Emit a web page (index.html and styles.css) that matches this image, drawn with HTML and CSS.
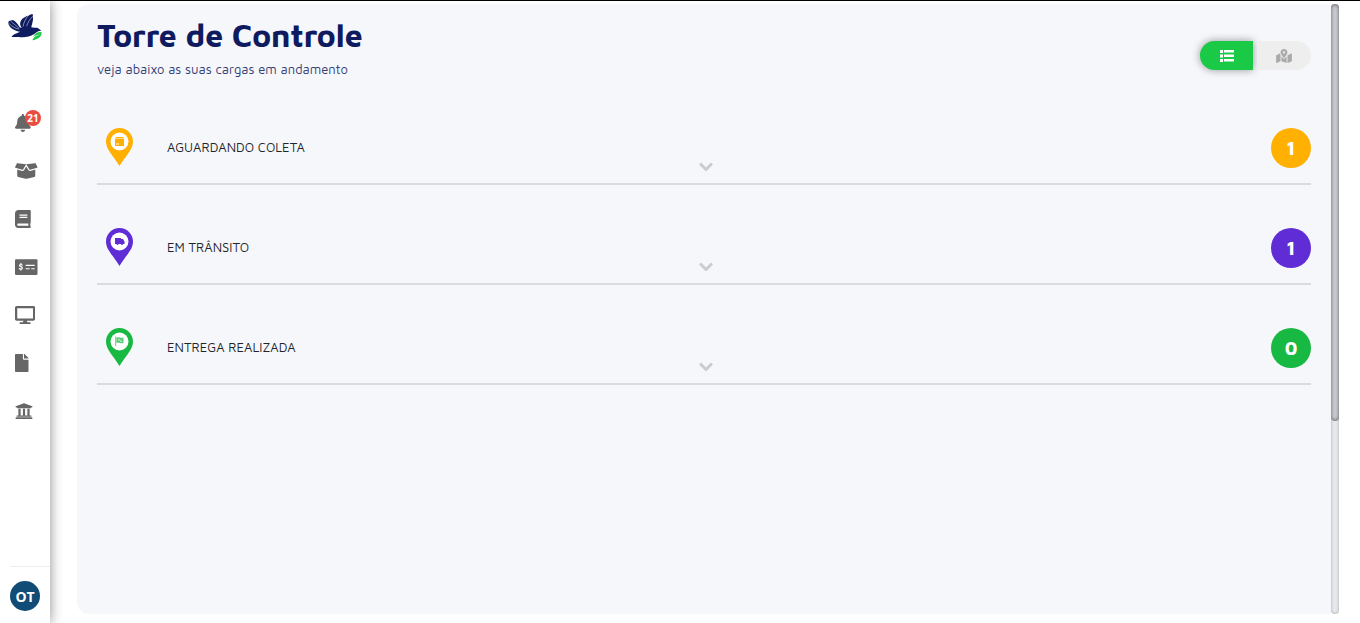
FILE: index.html
```html
<!DOCTYPE html>
<html lang="pt-BR">
  <head>
    <meta charset="utf-8" />
    <meta name="viewport" content="width=device-width, initial-scale=1" />
    <title>Torre de Controle</title>
    <link rel="stylesheet" href="styles.css">
  </head>
  <body>
    <div class="app">
      <nav class="sidebar">
        <a class="logo" href="#" aria-label="Início">
          <svg viewBox="0 0 102 82" width="34" height="27">
            <path fill="#0f1b5f" d="M10 69C14 63 25 59 36 54C22 52 8 45 3 35C0 30 0 25 2 21L14 18C20 20 26 26 31 34C33 39 37 42 41 42C35 35 35 26 39 20C43 11 54 8 58 5L61 6C64 2 71 0 75 1L75 9C77 19 72 30 70 40C78 43 88 38 96 47L101 51C91 50 88 55 79 61C65 71 45 72 32 70C24 69 17 71 10 69Z"/>
            <path fill="none" stroke="#fff" stroke-width="1.500" d="M45 38C47 26 53 15 60 5M56 37C59 27 66 14 75 7M3 29C12 39 23 44 33 46M7 21C15 30 24 34 33 44"/>
            <path fill="#1fc84b" d="M101 55C103 67 93 78 73 80C77 69 86 64 99 62C88 62 80 65 75 70C81 59 89 54 101 55Z"/>
          </svg>
        </a>
        <ul class="menu">
          <li>
            <a href="#" aria-label="Notificações">
              <svg class="icon" viewBox="0 0 448 512"><path d="M224 512c35.32 0 63.97-28.65 63.97-64H160.03c0 35.35 28.65 64 63.97 64zm215.39-149.71c-19.32-20.76-55.47-51.99-55.47-154.29 0-77.7-54.48-139.9-127.94-155.16V32c0-17.67-14.32-32-31.98-32s-31.98 14.33-31.98 32v20.84C118.56 68.1 64.08 130.3 64.08 208c0 102.3-36.15 133.53-55.47 154.29-6 6.45-8.66 14.16-8.61 21.71.11 16.4 12.98 32 32.1 32h383.8c19.12 0 32-15.6 32.1-32 .05-7.55-2.61-15.27-8.61-21.71z"/></svg>
              <span class="badge">21</span>
            </a>
          </li>
          <li>
            <a href="#" aria-label="Cargas">
              <svg class="icon" viewBox="0 0 640 512"><path d="M425.7 256c-16.9 0-32.8-9-41.4-23.4L320 126l-64.2 106.6c-8.7 14.5-24.6 23.5-41.5 23.5-4.5 0-9-.6-13.3-1.9L64 215v178c0 14.7 10 27.5 24.2 31l216.2 54.1c10.2 2.5 20.9 2.5 31 0L551.8 424c14.2-3.6 24.2-16.4 24.2-31V215l-137 39.1c-4.3 1.3-8.8 1.9-13.3 1.9zm212.6-112.2L586.8 41c-3.1-6.2-9.8-9.8-16.7-8.9L320 64l91.7 152.1c3.8 6.3 11.4 9.3 18.5 7.3l197.9-56.5c9.9-2.9 14.7-13.9 10.2-23.1zM53.2 41L1.7 143.8c-4.6 9.2.3 20.2 10.1 23l197.9 56.5c7.1 2 14.7-1 18.5-7.3L320 64 69.8 32.1c-6.9-.8-13.5 2.7-16.6 8.9z"/></svg>
            </a>
          </li>
          <li>
            <a href="#" aria-label="Cadastros">
              <svg class="icon" viewBox="0 0 448 512"><path d="M448 360V24c0-13.3-10.7-24-24-24H96C43 0 0 43 0 96v320c0 53 43 96 96 96h328c13.3 0 24-10.7 24-24v-16c0-7.5-3.5-14.3-8.9-18.7-4.2-15.4-4.2-59.3 0-74.7 5.4-4.3 8.9-11.1 8.9-18.6zM128 134c0-3.3 2.7-6 6-6h212c3.3 0 6 2.7 6 6v20c0 3.3-2.7 6-6 6H134c-3.3 0-6-2.7-6-6v-20zm0 64c0-3.3 2.7-6 6-6h212c3.3 0 6 2.7 6 6v20c0 3.3-2.7 6-6 6H134c-3.3 0-6-2.7-6-6v-20zm253.4 250H96c-17.7 0-32-14.3-32-32 0-17.6 14.4-32 32-32h285.4c-1.9 17.1-1.9 46.9 0 64z"/></svg>
            </a>
          </li>
          <li>
            <a href="#" aria-label="Pagamentos">
              <svg class="icon" viewBox="0 0 640 512">
                <rect y="32" width="640" height="448" rx="34"/>
                <path fill="none" stroke="#fff" stroke-width="32" d="M304 208H560M304 304H416M464 304H560"/>
                <path fill="none" stroke="#fff" stroke-width="34" stroke-linecap="round" d="M204 202C180 180 128 184 128 214C128 254 208 240 208 284C208 322 145 322 122 300M168 154V184M168 316V344"/>
              </svg>
            </a>
          </li>
          <li>
            <a href="#" aria-label="Monitor">
              <svg class="icon" viewBox="0 0 576 512"><path d="M528 0H48C21.5 0 0 21.5 0 48v320c0 26.5 21.5 48 48 48h192l-16 48h-72c-13.3 0-24 10.7-24 24s10.7 24 24 24h272c13.3 0 24-10.7 24-24s-10.7-24-24-24h-72l-16-48h192c26.5 0 48-21.5 48-48V48c0-26.5-21.5-48-48-48zm-16 352H64V64h448v288z"/></svg>
            </a>
          </li>
          <li>
            <a href="#" aria-label="Documentos">
              <svg class="icon" viewBox="0 0 384 512"><path d="M224 136V0H24C10.7 0 0 10.7 0 24v464c0 13.3 10.7 24 24 24h336c13.3 0 24-10.7 24-24V160H248c-13.2 0-24-10.8-24-24zm160-14.1v6.1H256V0h6.1c6.4 0 12.5 2.5 17 7l97.9 98c4.5 4.5 7 10.6 7 16.9z"/></svg>
            </a>
          </li>
          <li>
            <a href="#" aria-label="Financeiro">
              <svg class="icon" viewBox="0 0 512 512"><path d="M496 128v16a8 8 0 0 1-8 8h-24v12c0 6.627-5.373 12-12 12H60c-6.627 0-12-5.373-12-12v-12H24a8 8 0 0 1-8-8v-16a8 8 0 0 1 4.941-7.392l232-88a7.996 7.996 0 0 1 6.118 0l232 88A8 8 0 0 1 496 128zm-24 304H40c-13.255 0-24 10.745-24 24v16a8 8 0 0 0 8 8h464a8 8 0 0 0 8-8v-16c0-13.255-10.745-24-24-24zM96 192v192H60c-6.627 0-12 5.373-12 12v20h416v-20c0-6.627-5.373-12-12-12h-36V192h-64v192h-64V192h-64v192h-64V192H96z"/></svg>
            </a>
          </li>
        </ul>
        <div class="user">
          <button class="avatar" type="button">OT</button>
        </div>
      </nav>

      <main class="panel">
        <header class="panel-header">
          <div>
            <h1>Torre de Controle</h1>
            <p>veja abaixo as suas cargas em andamento</p>
          </div>
          <div class="view-toggle">
            <button class="view-btn active" type="button" aria-label="Lista">
              <svg viewBox="0 0 14 12" width="14" height="12"><path d="M0 0h3v3H0zM4 0h10v2.500H4zM0 4.500h3v3H0zM4 4.500h10V7H4zM0 9h3v3H0zM4 9h10v2.500H4z"/></svg>
            </button>
            <button class="view-btn" type="button" aria-label="Mapa">
              <svg viewBox="0 0 576 512" width="16" height="14"><path d="M288 0c-69.59 0-126 56.41-126 126 0 56.26 82.35 158.8 113.9 196.02 6.39 7.54 17.82 7.54 24.2 0C331.65 284.8 414 182.26 414 126 414 56.41 357.59 0 288 0zm0 168c-23.2 0-42-18.8-42-42s18.8-42 42-42 42 18.8 42 42-18.8 42-42 42zM20.12 215.95A32.006 32.006 0 0 0 0 245.66v250.32c0 11.32 11.43 19.06 21.94 14.86L160 448V214.92c-8.84-15.98-16.07-31.54-21.25-46.42L20.12 215.95zM288 359.67c-14.07 0-27.38-6.18-36.51-16.96-19.66-23.2-40.57-49.62-59.49-76.72v182l192 64V266c-18.92 27.09-39.82 53.52-59.49 76.72-9.13 10.77-22.44 16.95-36.51 16.95zm266.06-198.51L416 224v288l139.88-55.95A31.996 31.996 0 0 0 576 426.34V176.02c0-11.32-11.43-19.06-21.94-14.86z"/></svg>
            </button>
          </div>
        </header>

        <button class="stage waiting" type="button">
          <span class="stage-name">
            <svg class="pin" viewBox="0 0 27 38">
              <path d="M13.500 0C6 0 0 6 0 13.500C0 22 7 27 13.500 38C20 27 27 22 27 13.500C27 6 21 0 13.500 0Z"/>
              <circle cx="13.500" cy="13.500" r="9" fill="#fff"/>
              <path d="M10 9h7l1 1.500H9zM9 11h9v7H9z"/>
              <path fill="#fff" d="M10 15.500h3v1h-3z"/>
            </svg>
            AGUARDANDO COLETA
          </span>
          <svg class="chevron" viewBox="0 0 14 9"><path d="M1 1.500L7 7.500L13 1.500"/></svg>
          <span class="count">1</span>
        </button>

        <button class="stage transit" type="button">
          <span class="stage-name">
            <svg class="pin" viewBox="0 0 27 38">
              <path d="M13.500 0C6 0 0 6 0 13.500C0 22 7 27 13.500 38C20 27 27 22 27 13.500C27 6 21 0 13.500 0Z"/>
              <circle cx="13.500" cy="13.500" r="9" fill="#fff"/>
              <path d="M9 10h6v1h2l1.500 2.500V16H9z"/>
              <circle cx="11.500" cy="16" r="1"/>
              <circle cx="16" cy="16" r="1"/>
            </svg>
            EM TRÂNSITO
          </span>
          <svg class="chevron" viewBox="0 0 14 9"><path d="M1 1.500L7 7.500L13 1.500"/></svg>
          <span class="count">1</span>
        </button>

        <button class="stage delivered" type="button">
          <span class="stage-name">
            <svg class="pin" viewBox="0 0 27 38">
              <path d="M13.500 0C6 0 0 6 0 13.500C0 22 7 27 13.500 38C20 27 27 22 27 13.500C27 6 21 0 13.500 0Z"/>
              <circle cx="13.500" cy="13.500" r="9" fill="#fff"/>
              <path opacity=".7" d="M9.200 8.500h1V18h-1zM10.500 9.500c2-1 4 1 7 0V15c-3 1-5-1-7 0z"/>
              <path fill="#fff" opacity=".5" d="M12 11h2v1.500h-2zM14 12.500h2V14h-2z"/>
            </svg>
            ENTREGA REALIZADA
          </span>
          <svg class="chevron" viewBox="0 0 14 9"><path d="M1 1.500L7 7.500L13 1.500"/></svg>
          <span class="count">0</span>
        </button>
      </main>
      <div class="scrollbar"><div class="thumb"></div></div>
    </div>
  </body>
</html>
```

FILE: styles.css
```css
* {
  box-sizing: border-box;
}
body {
  margin: 0;
  font-family: "Maven Pro", "Noto Sans", sans-serif;
  background-color: #fff;
  color: #212529;
}
button {
  font-family: inherit;
  border: none;
  padding: 0;
  cursor: pointer;
}
.app {
  display: flex;
  height: 100vh;
  border-top: 1px solid #000;
}

/* Sidebar */
.sidebar {
  display: flex;
  flex-direction: column;
  width: 50px;
  background-color: #fff;
  box-shadow: 0 0 12px rgba(0, 0, 0, 0.45);
}
.logo {
  padding: 13px 0 0 8px;
  height: 98px;
}
.menu {
  list-style: none;
  margin: 0;
  padding: 0;
}
.menu a {
  position: relative;
  display: flex;
  align-items: center;
  height: 48px;
  padding-left: 15px;
}
.icon {
  height: 18px;
  fill: #666;
}
.badge {
  position: absolute;
  top: 11px;
  left: 25px;
  width: 16px;
  height: 16px;
  border-radius: 50%;
  background-color: #ea4c40;
  color: #fff;
  font-family: "Open Sans", sans-serif;
  font-size: 10px;
  font-weight: bold;
  line-height: 16px;
  text-align: center;
}
.user {
  margin: auto 0 0 10px;
  padding: 14px 0 12px;
  border-top: 1px solid #eee;
}
.avatar {
  display: block;
  width: 30px;
  height: 30px;
  border-radius: 50%;
  background-color: #104c75;
  color: #fff;
  font-family: "Open Sans", sans-serif;
  font-size: 14px;
  font-weight: bold;
}

/* Main panel */
.panel {
  flex: 1;
  margin: 3px 0 9px 27px;
  padding: 11px 20px;
  border-radius: 12px 0 0 12px;
  background-color: #f6f7fb;
  overflow: hidden;
}
.panel-header {
  display: flex;
  justify-content: space-between;
  height: 70px;
}
h1 {
  margin: 0;
  color: #0f1b5f;
  font-size: 32px;
  line-height: 40px;
}
.panel-header p {
  margin: 4px 0 0;
  color: #343d76;
  font-size: 13px;
  font-weight: 300;
  line-height: 20px;
}
.view-toggle {
  display: flex;
  gap: 4px;
  margin-top: 26px;
}
.view-btn {
  display: flex;
  align-items: center;
  justify-content: center;
  width: 54px;
  height: 29px;
  background-color: #eee;
  border-radius: 0 15px 15px 0;
  fill: #aaa;
}
.view-btn.active {
  width: 53px;
  background-color: #1aca46;
  border-radius: 15px 0 0 15px;
  box-shadow: 0 0 8px rgba(0, 0, 0, 0.4);
  fill: #fff;
}

/* Stages */
.stage {
  display: grid;
  grid-template-columns: 1fr auto 1fr;
  align-items: center;
  width: 100%;
  height: 100px;
  padding: 27px 0 0;
  border-bottom: 2px solid #dadbdd;
  background-color: transparent;
  color: #212529;
  font-size: 13px;
  text-align: left;
}
.stage-name {
  display: flex;
  align-items: center;
  gap: 34px;
  padding: 0 0 2px 9px;
}
.pin {
  width: 27px;
  height: 38px;
}
.chevron {
  width: 14px;
  height: 9px;
  margin: 38px 0 0 4px;
  fill: none;
  stroke: #ccc;
  stroke-width: 3;
}
.count {
  justify-self: end;
  width: 40px;
  border-radius: 50%;
  color: #fff;
  font-size: 19px;
  font-weight: bold;
  line-height: 40px;
  text-align: center;
}
.waiting .pin {
  fill: #ffb000;
}
.waiting .count {
  background-color: #ffb000;
}
.transit .pin {
  fill: #5f2cd6;
}
.transit .count {
  background-color: #5f2cd6;
}
.delivered .pin {
  fill: #18b943;
}
.delivered .count {
  background-color: #18b943;
}

/* Scrollbar */
.scrollbar {
  width: 8px;
  margin: 3px 21px 9px 0;
  border-radius: 4px;
  background-color: #e7e8ec;
  box-shadow: inset 0 0 3px rgba(0, 0, 0, 0.3);
}
.thumb {
  height: 68.3%;
  border-radius: 4px;
  background-color: #d0d1d6;
  box-shadow: inset 0 0 4px rgba(0, 0, 0, 0.6);
}
```
